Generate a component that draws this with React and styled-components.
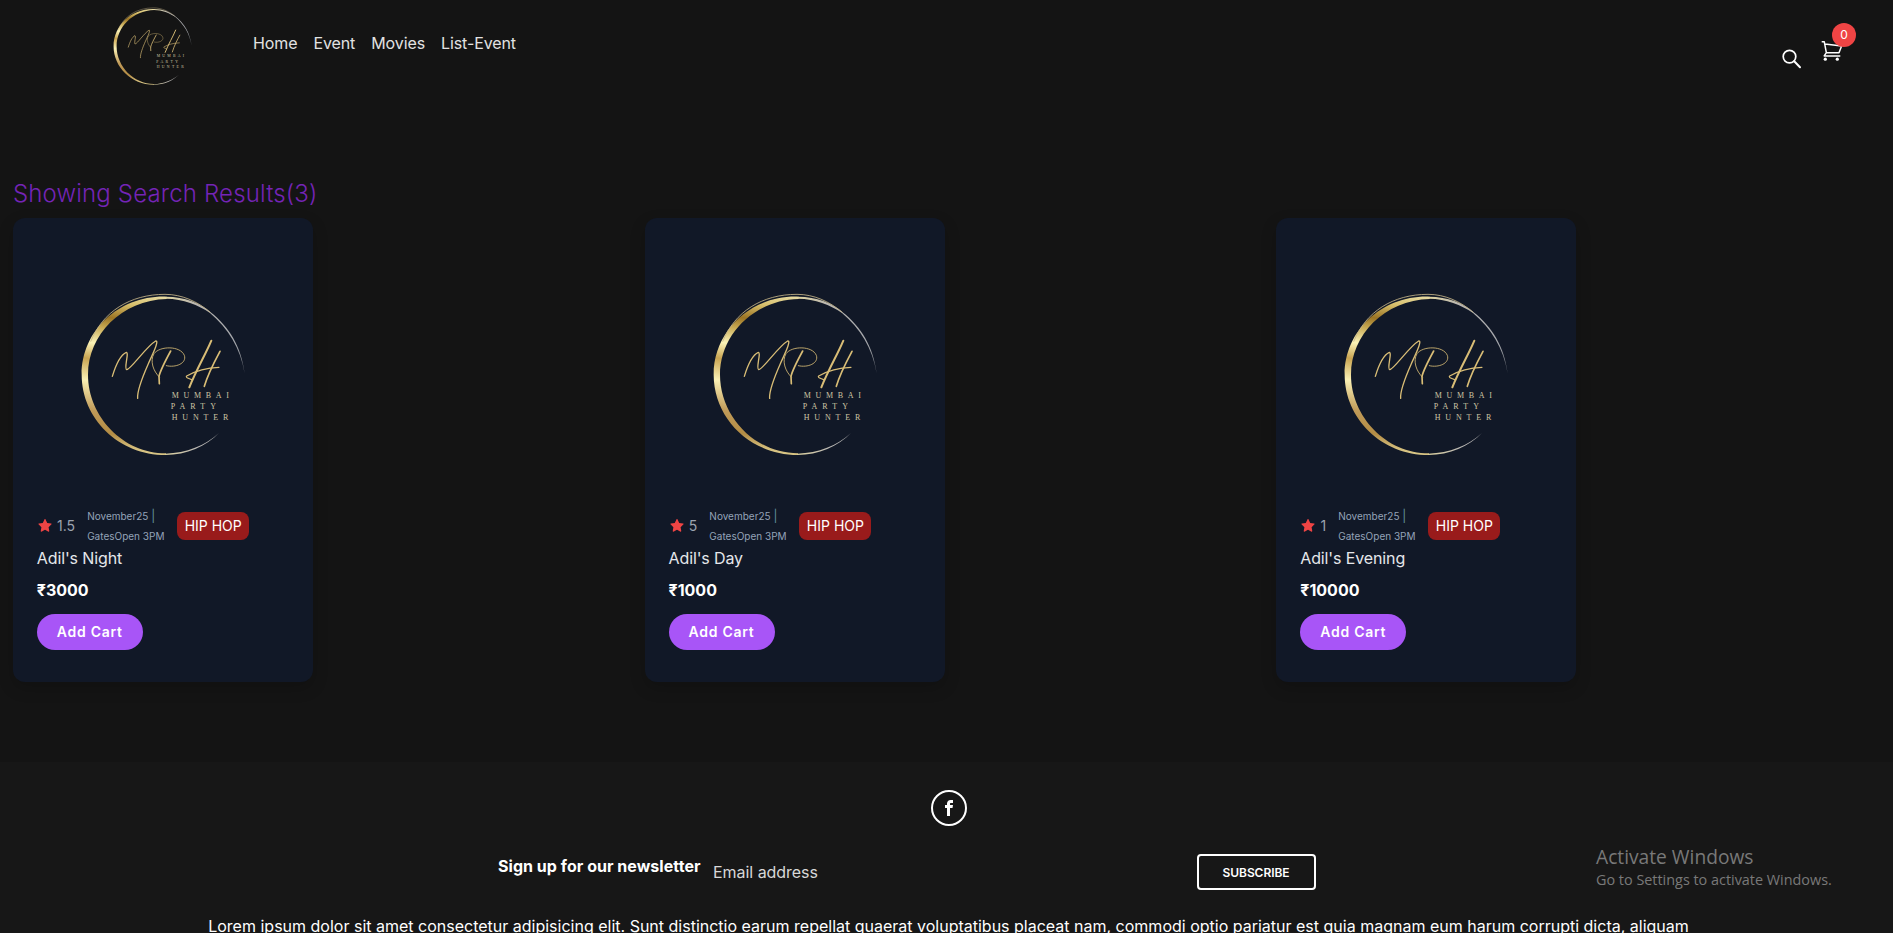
import React from "react";
import styled, { createGlobalStyle } from "styled-components";
import { AiFillStar } from "react-icons/ai";
import { ImFacebook } from "react-icons/im";

const Global = createGlobalStyle`
  * { box-sizing: border-box; margin: 0; padding: 0; }
  html, body { height: 100%; overflow: hidden; }
  body { background: #141414; color: #fff; font: 400 16px/24px Inter, "Noto Sans", sans-serif; }
`;

const Page = styled.div`height: 933px; overflow: hidden; display: flex; flex-direction: column;`;

const Header = styled.header`
  height: 178px; flex: none; display: flex; align-items: flex-start;
  padding: 1px 37px 0 108px;
`;
const Nav = styled.nav`
  display: flex; gap: 16px; margin: 30px auto 0 54px; color: #e2e2e2; letter-spacing: -0.1px;
`;
const Tools = styled.div`display: flex; align-items: flex-start; gap: 15px; color: #fff;`;
const SearchButton = styled.button`
  margin-top: 46px; width: 24px; height: 24px; border: 0; background: none; color: inherit;
  svg { display: block; }
`;
const CartButton = styled.button`
  position: relative; margin-top: 38px; width: 37px; height: 24px; border: 0; background: none; color: inherit;
  svg { display: block; }
`;
const CartCount = styled.span`
  position: absolute; top: -16px; right: 0; width: 24px; height: 24px; border-radius: 50%;
  background: #ef4444; font: 400 12px/24px Inter, sans-serif; text-align: center;
`;

const Heading = styled.h1`
  font-size: 24px; line-height: 32px; font-weight: 300; letter-spacing: 0.16px; color: #7424b6;
  padding-left: 13px; height: 40px; flex: none;
`;
const Results = styled.main`
  display: grid; grid-template-columns: repeat(3, 1fr); gap: 15px; padding-left: 12.8px;
  height: 544px; flex: none; align-items: start;
`;
const Card = styled.article`
  width: 300px; height: 464px; border-radius: 12px; background: #111827;
  box-shadow: 0 6px 16px rgba(0,0,0,.18);
  padding: 62px 24px 0; display: flex; flex-direction: column; align-items: flex-start;
`;
const Artwork = styled.div`margin: 0 0 36px 33px; height: 190px;`;
const Meta = styled.div`display: flex; align-items: center; height: 40px;`;
const Rating = styled.span`
  display: flex; align-items: center; gap: 4.3px; font-size: 14px; line-height: 20px; color: #9ca3af;
  svg { color: #ef4444; }
`;
const When = styled.span`
  width: 78px; margin: 0 12px; font-size: 10px; line-height: 20px; color: #94a3b8;
`;
const Bar = styled.span`font-size: 12px; line-height: 16px; color: #64909c;`;
const Genre = styled.span`
  background: #991b1b; border-radius: 8px; padding: 4px 7.5px; font-size: 14px; line-height: 20px; white-space: nowrap;
`;
const Title = styled.h2`
  font-size: 16px; line-height: 24px; font-weight: 400; color: #e5e7eb; letter-spacing: -0.12px;
`;
const Price = styled.p`font-weight: 700; margin-top: 8px;`;
const AddButton = styled.button`
  margin-top: 12px; height: 36px; padding: 0 20px; border: 0; border-radius: 18px; background: #a855f7;
  color: #fff; font: 600 14px/20px Inter, sans-serif; letter-spacing: 0.74px;
`;

const Footer = styled.footer`
  position: relative; flex: 1; background: #171717; display: flex; flex-direction: column; align-items: center;
  padding-top: 28px;
`;
const Social = styled.a`
  width: 36px; height: 36px; border: 2px solid #fff; border-radius: 50%; margin-left: 5px;
  display: flex; align-items: center; justify-content: center;
`;
const Newsletter = styled.form`
  width: 818px; height: 36px; margin: 28px 79px 0 0; display: flex; align-items: flex-start;
`;
const NewsLabel = styled.label`
  font-weight: 700; width: 202px; white-space: nowrap; letter-spacing: 0.04px;
`;
const Email = styled.input`
  width: 484px; margin: 4px 0 0 13px; height: 28px; border: 0; background: none; outline: 0;
  font: 400 16px/24px Inter, sans-serif;
  &::placeholder { color: #d8d8d8; opacity: 1; letter-spacing: -0.04px; }
`;
const Subscribe = styled.button`
  width: 119px; height: 36px; border: 2px solid #fff; border-radius: 4px; background: none; color: #fff;
  font: 600 12px/18px Inter, sans-serif; letter-spacing: -0.08px; text-transform: uppercase; flex: none;
  padding: 1px 1px 0 0;
`;
const Copy = styled.p`
  width: 1482px; margin: 24px 0 0 4px; text-align: center; white-space: nowrap;
`;
const Watermark = styled.aside`
  position: absolute; left: 1596px; top: 82px; color: #797979; font-family: "Open Sans", "Noto Sans", sans-serif;
  white-space: nowrap;
`;
const WatermarkTitle = styled.div`font-size: 19.2px; line-height: 26px;`;
const WatermarkText = styled.div`font-size: 14.4px; line-height: 20px;`;

const LogoText = styled.text`
  font-family: "Liberation Serif", serif; font-size: 24px; fill: #cfc6a4;
`;

function SearchIcon() {
  return (
    <svg width="24" height="24" viewBox="0 0 24 24" fill="none" stroke="currentColor" strokeWidth="1.7" strokeLinecap="round">
      <circle cx="9.5" cy="9.6" r="6.3" />
      <path strokeWidth="2" d="M14.2 14.3L20 20.2" />
    </svg>
  );
}

function CartIcon() {
  return (
    <svg width="24" height="24" viewBox="0 0 24 24" fill="none" stroke="currentColor" strokeWidth="1.5" strokeLinejoin="round">
      <path d="M2.7 2.8H5.3L7.4 13.8H20L22.6 7.1L6 5.1M7.2 13.8L5.2 16.9H21.3" />
      <circle cx="6.3" cy="20.2" r="1.6" fill="currentColor" stroke="none" />
      <circle cx="18.3" cy="20.2" r="1.6" fill="currentColor" stroke="none" />
    </svg>
  );
}

function Logo({ size, id }) {
  return (
    <svg width={size} height={size} viewBox="0 0 570 570" fill="none">
      <defs>
        <linearGradient id={id} gradientUnits="userSpaceOnUse" x1="285" y1="42" x2="200" y2="525">
          <stop offset="0" stopColor="#e9dfae" />
          <stop offset=".1" stopColor="#d8c06c" />
          <stop offset=".2" stopColor="#9b7424" />
          <stop offset=".27" stopColor="#c9ab55" />
          <stop offset=".37" stopColor="#fbf3b8" />
          <stop offset=".47" stopColor="#c9a451" />
          <stop offset=".6" stopColor="#faf0b4" />
          <stop offset=".78" stopColor="#c09a58" />
          <stop offset=".9" stopColor="#b48d45" />
          <stop offset="1" stopColor="#e6da9d" />
        </linearGradient>
        <linearGradient id={id + "r"} gradientUnits="userSpaceOnUse" x1="285" y1="0" x2="524" y2="0">
          <stop offset="0" stopColor="#e0d4a0" />
          <stop offset=".4" stopColor="#b9b6b2" />
          <stop offset=".9" stopColor="#a3a5aa" />
          <stop offset="1" stopColor="#6c7078" />
        </linearGradient>
      </defs>
      <path fill={`url(#${id})`} d="M290 50C150 45 35 150 35 284C35 415 145 525 288 525L288 520C160 520 54 410 54 284C54 165 155 60 290 57Z" />
      <path fill={`url(#${id}r)`} d="M288 50C345 50 390 69 421 96C478 141 514 200 524 280C511 203 474 145 420 99C385 74 340 57 288 56ZM286 521C350 519 405 497 447 459C409 499 350 525 286 525Z" />
      <path stroke="#c8b78a" strokeWidth="2.5" d="M62 185C98 95 180 43 285 43C335 43 382 64 421 97" />
      <g stroke="#d9bd76" strokeLinecap="round" strokeLinejoin="round">
        <path strokeWidth="4" d="M127 289C137 256 151 225 169 217C178 218 161 266 170 269C181 270 229 199 257 183C269 181 247 224 235 251C216 294 201 335 203 355" />
        <path strokeWidth="2.5" d="M268 291C250 274 239 243 252 221C270 197 331 197 343 226C351 250 317 264 289 257" />
        <path strokeWidth="5" d="M302 213C289 237 271 271 267 289L268 311" />
        <path strokeWidth="6" d="M424 182C406 225 381 265 358 322" />
        <path strokeWidth="5" d="M450 214C436 240 415 278 403 319" />
        <path strokeWidth="3.5" d="M447 262C408 263 374 274 350 288C345 292 358 297 365 299" />
      </g>
      <LogoText x="305" y="353" textLength="172">MUMBAI</LogoText>
      <LogoText x="302" y="387" textLength="136">PARTY</LogoText>
      <LogoText x="305" y="420" textLength="170">HUNTER</LogoText>
    </svg>
  );
}

const EVENTS = [
  { name: "Adil's Night", rating: "1.5", price: 3000 },
  { name: "Adil's Day", rating: "5", price: 1000 },
  { name: "Adil's Evening", rating: "1", price: 10000 },
];

function EventCard({ event, id }) {
  return (
    <Card>
      <Artwork><Logo size={190} id={id} /></Artwork>
      <Meta>
        <Rating><AiFillStar size={16} />{event.rating}</Rating>
        <When>November25 <Bar>|</Bar> GatesOpen 3PM</When>
        <Genre>HIP HOP</Genre>
      </Meta>
      <Title>{event.name}</Title>
      <Price>₹{event.price}</Price>
      <AddButton>Add Cart</AddButton>
    </Card>
  );
}

export default function App() {
  return (
    <Page>
      <Global />
      <Header>
        <Logo size={91} id="brand" />
        <Nav>
          <span>Home</span><span>Event</span><span>Movies</span><span>List-Event</span>
        </Nav>
        <Tools>
          <SearchButton><SearchIcon /></SearchButton>
          <CartButton><CartIcon /><CartCount>0</CartCount></CartButton>
        </Tools>
      </Header>
      <Heading>Showing Search Results(3)</Heading>
      <Results>
        {EVENTS.map((e, i) => <EventCard key={e.name} event={e} id={`card${i}`} />)}
      </Results>
      <Footer>
        <Social><ImFacebook size={16} /></Social>
        <Newsletter>
          <NewsLabel>Sign up for our newsletter</NewsLabel>
          <Email placeholder="Email address" />
          <Subscribe type="button">Subscribe</Subscribe>
        </Newsletter>
        <Copy>
          Lorem ipsum dolor sit amet consectetur adipisicing elit. Sunt distinctio earum repellat quaerat voluptatibus placeat nam, commodi optio pariatur est quia magnam eum harum corrupti dicta, aliquam
        </Copy>
        <Watermark>
          <WatermarkTitle>Activate Windows</WatermarkTitle>
          <WatermarkText>Go to Settings to activate Windows.</WatermarkText>
        </Watermark>
      </Footer>
    </Page>
  );
}
